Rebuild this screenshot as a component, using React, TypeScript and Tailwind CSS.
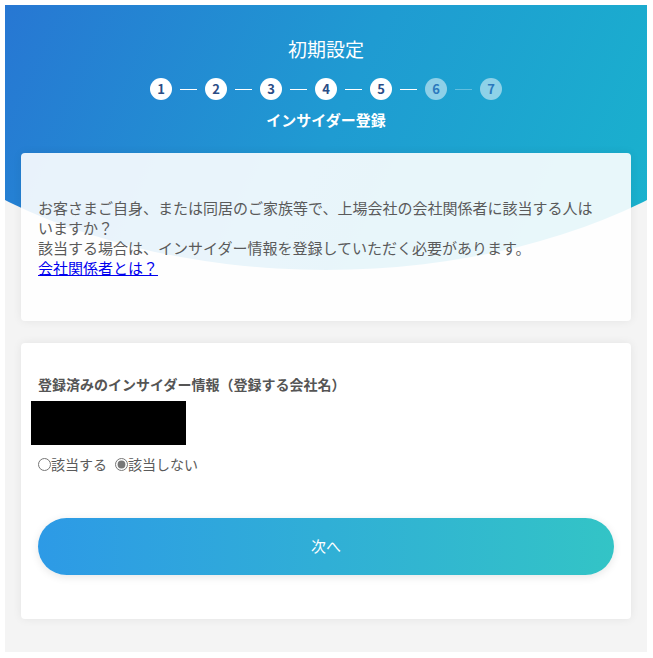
import React from "react";

const steps = [1, 2, 3, 4, 5, 6, 7];
const current = 5;

const Stepper = () => (
  <div className="flex items-center justify-center">
    {steps.map((n, i) => {
      const done = n <= current;
      return (
        <React.Fragment key={n}>
          {i > 0 && (
            <span
              className={`mx-2 h-px w-[17px] ${n <= current + 1 && n - 1 <= current ? "bg-white" : "bg-white/30"}`}
            />
          )}
          <span
            className={`flex h-[22px] w-[22px] items-center justify-center rounded-full text-[13px] font-bold ${
              done ? "bg-white text-[#2a4c86]" : "bg-white/50 text-[#2b79bd]"
            }`}
          >
            {n}
          </span>
        </React.Fragment>
      );
    })}
  </div>
);

export default function App() {
  const font = { fontFamily: '"Noto Sans CJK JP", "Noto Sans", sans-serif' };

  return (
    <div className="h-[658px] w-[653px] bg-white pb-[6px] pl-[5px] pr-[6px] pt-[5px]" style={font}>
      <div className="relative h-full w-full overflow-hidden bg-[#f4f4f4]">
        {/* curved header background */}
        <div className="absolute left-0 top-0 h-[270px] w-full bg-[linear-gradient(115deg,#2777d3_0%,#1f9bd2_50%,#19b3cd_100%)] [clip-path:ellipse(500px_300px_at_50%_-35px)]" />

        <div className="relative flex flex-col">
          <div className="flex flex-col items-center pt-[32px] text-white">
            <h1 className="text-[19px] leading-[24px]">初期設定</h1>
            <div className="mt-[17px]">
              <Stepper />
            </div>
            <p className="mt-[10px] text-[15px] font-bold leading-[20px]">インサイダー登録</p>
          </div>

          <div className="mx-4 mt-[23px] rounded bg-white/90 pb-[43px] pl-[17px] pr-[30px] pt-[45px] shadow-[0_0_10px_rgba(0,0,0,0.07)]">
            <p className="text-[15px] leading-[20px] text-[#5a5a5a]">
              お客さまご自身、または同居のご家族等で、上場会社の会社関係者に該当する人はいますか？
              <br />
              該当する場合は、インサイダー情報を登録していただく必要があります。
              <br />
              <a href="#" className="text-[#0000ee] underline">
                会社関係者とは？
              </a>
            </p>
          </div>

          <div className="mx-4 mt-[22px] rounded bg-white px-[17px] pb-[44px] pt-[32px] shadow-[0_0_10px_rgba(0,0,0,0.07)]">
            <h2 className="text-[14px] font-bold leading-[18px] text-[#555]">
              登録済みのインサイダー情報（登録する会社名）
            </h2>
            <div className="-ml-[7px] mt-[8px] h-[44px] w-[155px] bg-black" />
            <div className="mt-[10px] flex items-center text-[14px] leading-[18px] text-[#5a5a5a]">
              <label className="flex items-center">
                <input type="radio" name="insider" className="m-0 h-[13px] w-[13px] accent-[#777]" />
                <span>該当する</span>
              </label>
              <label className="ml-[8px] flex items-center">
                <input
                  type="radio"
                  name="insider"
                  defaultChecked
                  className="m-0 h-[13px] w-[13px] accent-[#777]"
                />
                <span>該当しない</span>
              </label>
            </div>
            <button className="mt-[45px] flex h-[57px] w-full items-center justify-center rounded-full bg-[linear-gradient(90deg,#2d9ae6,#33c4c6)] text-[15px] text-white shadow-[0_2px_8px_rgba(0,0,0,0.1)]">
              次へ
            </button>
          </div>
        </div>
      </div>
    </div>
  );
}
